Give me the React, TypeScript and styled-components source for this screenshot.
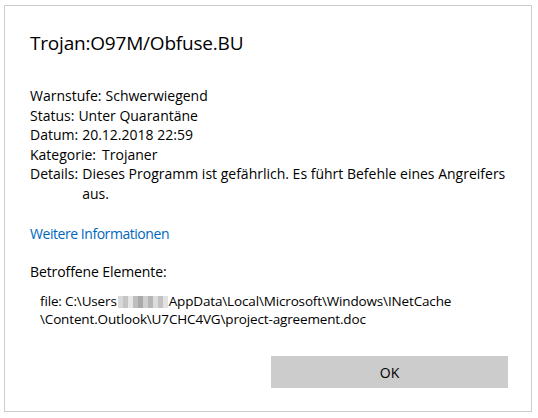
import React from "react";
import styled, { createGlobalStyle } from "styled-components";

const Global = createGlobalStyle`
  html, body { margin: 0; padding: 0; background: #ffffff; }
  body { font-family: "Open Sans", "Noto Sans", "Liberation Sans", sans-serif; color: #000; }
`;

const Dialog = styled.div`
  box-sizing: border-box;
  margin: 5px 0 0 4px;
  width: 528px;
  height: 407px;
  border: 1px solid #cccccc;
  display: flex;
  flex-direction: column;
  padding: 0 23px 23px 25px;
`;

const Title = styled.h1`
  margin: 25px 0 0 0;
  font-size: 19px;
  font-weight: 400;
  line-height: 24px;
  letter-spacing: -0.2px;
`;

const Info = styled.div`
  margin-top: 31px;
  display: flex;
  flex-direction: column;
  font-size: 14px;
  line-height: 19.5px;
  letter-spacing: 0;
`;

const Row = styled.div<{ $gap?: number }>`
  display: flex;
  gap: ${(p) => p.$gap ?? 4}px;
`;

const Label = styled.span`
  flex: none;
`;

const Value = styled.span``;

const Link = styled.a`
  margin-top: 21px;
  color: #0067c0;
  font-size: 14px;
  line-height: 20px;
  text-decoration: none;
  letter-spacing: -0.45px;
  align-self: flex-start;
  cursor: pointer;
`;

const Heading = styled.div`
  margin-top: 18px;
  font-size: 14px;
  line-height: 20px;
  letter-spacing: -0.1px;
`;

const PathText = styled.div`
  margin: 10px 0 0 10px;
  font-size: 13.5px;
  line-height: 18px;
  letter-spacing: -0.15px;
`;

const Blur = styled.span`
  display: inline-flex;
  vertical-align: -2px;
  width: 50px;
  height: 12px;
  margin: 0 1px;
`;

const Pix = styled.span<{ $c: string }>`
  flex: 1;
  background: ${(p) => p.$c};
`;

const Footer = styled.div`
  margin-top: auto;
  display: flex;
  justify-content: flex-end;
`;

const Button = styled.button`
  width: 237px;
  height: 32px;
  border: none;
  background: #cccccc;
  font-family: inherit;
  font-size: 14px;
  color: #000;
  padding: 0;
`;

const blurCols = ["#d8d8d8", "#c4c4c4", "#e6e6e6", "#bdbdbd", "#a9a9a9", "#cfcfcf", "#b5b5b5", "#dcdcdc", "#c2c2c2", "#e2e2e2"];

export default function App() {
  return (
    <>
      <Global />
      <Dialog>
        <Title>Trojan:O97M/Obfuse.BU</Title>
        <Info>
          <Row>
            <Label>Warnstufe:</Label>
            <Value>Schwerwiegend</Value>
          </Row>
          <Row>
            <Label>Status:</Label>
            <Value>Unter Quarantäne</Value>
          </Row>
          <Row>
            <Label>Datum:</Label>
            <Value>20.12.2018 22:59</Value>
          </Row>
          <Row $gap={6}>
            <Label>Kategorie:</Label>
            <Value>Trojaner</Value>
          </Row>
          <Row>
            <Label>Details:</Label>
            <Value>
              Dieses Programm ist gefährlich. Es führt Befehle eines Angreifers
              <br />
              aus.
            </Value>
          </Row>
        </Info>
        <Link>Weitere Informationen</Link>
        <Heading>Betroffene Elemente:</Heading>
        <PathText>
          file: C:\Users
          <Blur>
            {blurCols.map((c, i) => (
              <Pix key={i} $c={c} />
            ))}
          </Blur>
          AppData\Local\Microsoft\Windows\INetCache
          <br />
          \Content.Outlook\U7CHC4VG\project-agreement.doc
        </PathText>
        <Footer>
          <Button>OK</Button>
        </Footer>
      </Dialog>
    </>
  );
}
